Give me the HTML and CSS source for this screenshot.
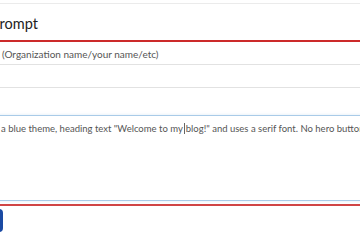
FILE: index.html
```html
<!DOCTYPE html>
<html>
<head>
  <title>Site Builder</title>
  <meta charset="utf-8">
  <link rel="stylesheet" href="styles.css">
</head>
<body>
  <div class="form">
    <div class="prev-field"></div>

    <h2 class="section-title">Prompt</h2>

    <div class="form-group">
      <div class="hint">(Organization name/your name/etc)</div>
      <input type="text" class="field">
    </div>

    <div class="form-group">
      <div class="textarea">a blue theme, heading text "Welcome to my<span class="caret"></span>blog!" and uses a serif font. No hero button, no images.</div>
    </div>

    <div class="section-end"></div>

    <button class="generate">Generate</button>
  </div>
</body>
</html>
```

FILE: styles.css
```css
body {
  margin: 0;
  overflow: hidden;
  font-family: Lato, 'Open Sans', sans-serif;
  color: #333;
  background: #fff;
}

.form {
  width: 760px;
  margin-left: -9px;
}

.prev-field {
  height: 3px;
  border-bottom: 1px solid #ebebeb;
}

.section-title {
  margin: 0;
  padding: 10px 0 6px;
  font-size: 14.5px;
  line-height: 20px;
  font-weight: 400;
  color: #222;
  border-bottom: 2px solid #cc2a2a;
}

.hint {
  padding: 5px 0 0 11px;
  font-size: 10px;
  line-height: 14px;
  color: #555;
}

.field {
  display: block;
  width: 100%;
  height: 24px;
  margin-top: 3px;
  border: 1px solid #e2e2e2;
  box-sizing: border-box;
  background: #fff;
}

.textarea {
  margin-top: 27px;
  height: 86px;
  padding: 6px 9px 4px;
  box-sizing: border-box;
  border: 1px solid #a9cbe8;
  box-shadow: 0 0 3px rgba(169, 203, 232, 0.4);
  font-size: 9.5px;
  line-height: 14px;
  color: #555;
  white-space: nowrap;
}

.caret {
  display: inline-block;
  width: 1px;
  height: 11px;
  margin: 0 1px;
  vertical-align: -2px;
  background: #666;
}

.section-end {
  margin-top: 3px;
  border-bottom: 2px solid #d04545;
}

.generate {
  display: block;
  margin: 3px 0 0 -68px;
  width: 80px;
  height: 23px;
  padding: 0;
  border: none;
  border-radius: 4px;
  background-color: #1a4aa3;
  color: #fff;
  font-family: Lato, sans-serif;
  font-size: 11px;
}
```
